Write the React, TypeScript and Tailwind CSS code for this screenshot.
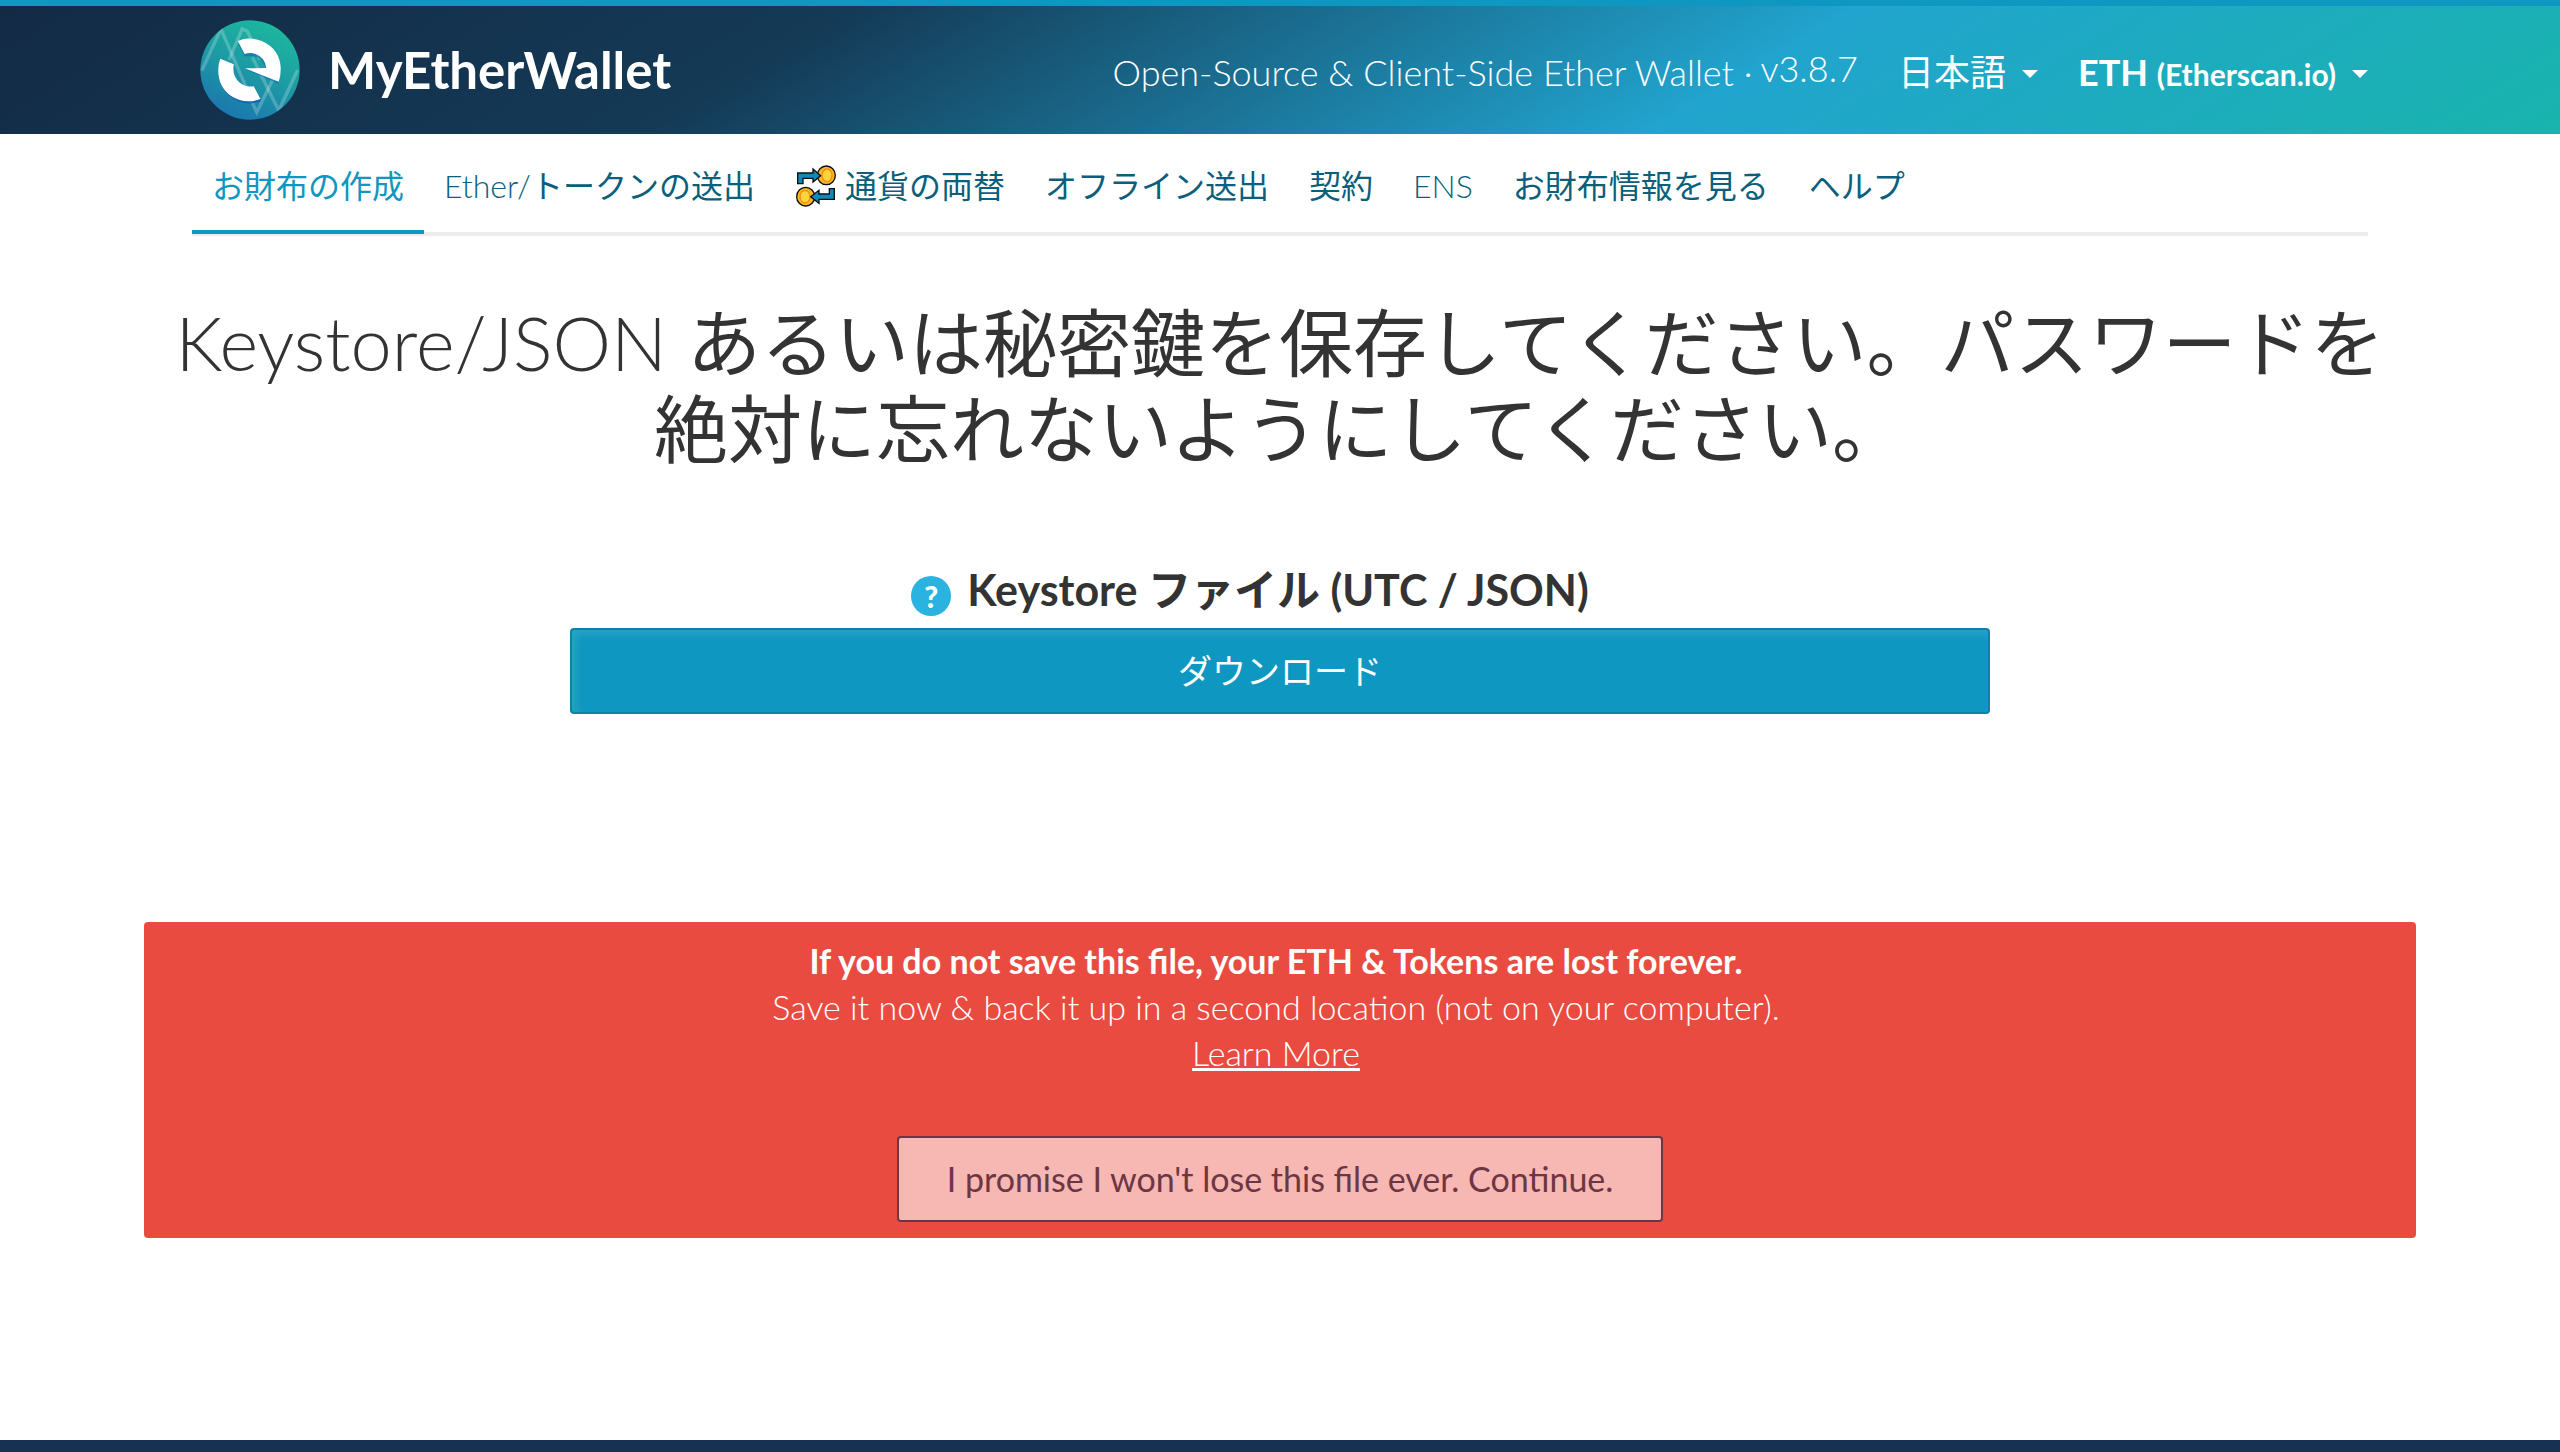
import { useState } from "react";
import type { ReactNode } from "react";

const Logo = () => (
 <svg viewBox="35 32 296 296" className="size-25 shrink-0" aria-hidden="true">
  <defs>
   <linearGradient id="logoFill" x1="0.7" y1="0.05" x2="0.25" y2="1">
    <stop offset="0" stopColor="#1db69f" />
    <stop offset="0.5" stopColor="#1c98a4" />
    <stop offset="1" stopColor="#1b74b0" />
   </linearGradient>
   <clipPath id="logoClip">
    <circle cx="183" cy="180" r="147" />
   </clipPath>
  </defs>
  <circle cx="183" cy="180" r="147" fill="url(#logoFill)" />
  <g clipPath="url(#logoClip)" fill="none" stroke="#fff" strokeOpacity="0.22" strokeWidth="10">
   <path d="M40 182 L97 58 L172 232" />
   <path d="M121 150 L160 58 L176 66 L212 150" />
   <path d="M190 142 L268 300 L324 180" />
   <path d="M186 268 L203 305 L252 205" />
  </g>
  <path d="M147 101 Q205 80 242 112 Q274 138 272 180 L268 221 L170 178 L230 178 Q218 130 167 140 Z" fill="#1863ab" opacity="0.55" />
  <path d="M92 156 L130 172 Q128 232 192 236 L216 272 Q160 292 120 255 Q88 222 92 156 Z" fill="#1765b3" />
  <path d="M147 94 Q180 80 218 94 Q272 118 274 176 Q274 198 268 215 L168 175 L231 174 Q228 144 200 133 Q183 127 167 133 Z" fill="#fff" />
  <path d="M95 147 L135 163 Q129 197 152 217 Q170 232 194 228 L214 266 Q168 283 127 257 Q89 230 89 180 Q89 162 95 147 Z" fill="#fff" />
 </svg>
);

const SwapIcon = () => (
 <svg viewBox="46 17 124 126" className="size-10.5 shrink-0" aria-hidden="true">
  <g stroke="#0c0f12" strokeWidth="4" strokeLinejoin="miter">
   <ellipse cx="139" cy="48" rx="27" ry="28" fill="#fdb827" />
   <ellipse cx="77" cy="112" rx="27" ry="28" fill="#fdb827" />
  </g>
  <g fill="#ffd43a" stroke="#f08c1c" strokeWidth="4">
   <ellipse cx="141" cy="48" rx="15" ry="19" />
   <ellipse cx="75" cy="112" rx="15" ry="19" />
  </g>
  <g fill="#0e8ab8" stroke="#0c0f12" strokeWidth="4" strokeLinejoin="miter">
   <path d="M53 73 V41 H99 V29 L122 49 L99 68 V57 H69 V73 Z" />
   <path d="M163 88 V120 H117 V132 L92 112 L117 93 V104 H148 V88 Z" />
  </g>
 </svg>
);

const Caret = () => (
 <svg viewBox="0 0 16 8" className="mt-1 h-2 w-4 shrink-0" aria-hidden="true">
  <path d="M0 0H16L8 8Z" fill="currentColor" />
 </svg>
);

const tabs: { label: string; icon?: ReactNode }[] = [
 { label: "お財布の作成" },
 { label: "Ether/トークンの送出" },
 { label: "通貨の両替", icon: <SwapIcon /> },
 { label: "オフライン送出" },
 { label: "契約" },
 { label: "ENS" },
 { label: "お財布情報を見る" },
 { label: "ヘルプ" },
];

const App = () => {
 const [active, setActive] = useState(0);

 return (
  <div className="min-h-screen w-full bg-white flex flex-col font-['Lato','Noto_Sans_CJK_JP',sans-serif] font-light text-[#333]">
   <header className="border-t-6 border-[#0e97c0] bg-[linear-gradient(149deg,#132a45,#143a56_31%,#21a4ce_67%,#19b4ad)] text-white">
    <div className="mx-auto w-full max-w-[2272px] pl-14 pr-12 flex items-center justify-between py-3.5">
     <a href="#" className="flex items-center gap-7 text-[51px] leading-24 font-bold">
      <Logo />
      MyEtherWallet
     </a>
     <div className="flex items-start gap-10 text-4xl leading-11">
      <div className="flex items-start gap-2">
       <span className="pt-1">Open-Source &amp; Client-Side Ether Wallet ·</span>
       <button type="button">v3.8.7</button>
      </div>
      <button type="button" className="flex items-center gap-4 pt-1 font-normal">
       日本語
       <Caret />
      </button>
      <button type="button" className="flex items-center gap-4 pt-1 font-bold">
       <span>
        ETH <small className="text-3xl">(Etherscan.io)</small>
       </span>
       <Caret />
      </button>
     </div>
    </div>
   </header>

   <nav className="mx-auto w-full max-w-[2272px] px-12 font-['Lato_Light','Lato','Noto_Sans_CJK_JP',sans-serif] font-normal">
    <ul className="flex border-b-4 border-[#ececec] pt-6">
     {tabs.map((tab, idx) => (
      <li key={tab.label}>
       <a
        href="#"
        onClick={() => setActive(idx)}
        className={`-mb-0.5 flex items-center gap-2 border-b-4 px-5 pt-1 pb-5 text-[32px] leading-12 whitespace-nowrap ${
         idx === active
          ? "border-[#0e97c0] text-[#0e97c0]"
          : "border-transparent text-[#0b5f7c]"
        }`}>
        {tab.icon}
        {tab.label}
       </a>
      </li>
     ))}
    </ul>
   </nav>

   <main className="mx-auto w-full max-w-[2272px] flex-1 flex flex-col items-center pb-50">
    <h1 className="px-6 pt-16 text-center text-[74px] leading-[86px] font-['Lato_Light','Lato','Noto_Sans_CJK_JP',sans-serif] font-normal">
     Keystore/JSON あるいは秘密鍵を保存してください。パスワードを絶対に忘れないようにしてください。
    </h1>

    <section className="w-5/8 pt-22 flex flex-col">
     <div className="flex items-center justify-center gap-4 pr-15">
      <a
       href="#"
       aria-label="Help"
       className="mt-3 flex size-10 items-center justify-center rounded-full bg-[#2ab2e0] text-3xl font-black text-white">
       ?
      </a>
      <h2 className="text-[43px] leading-15 font-bold">
       Keystore ファイル (UTC / JSON)
      </h2>
     </div>
     <button
      type="button"
      className="mt-2 rounded-sm border-2 border-[#0c82a6] bg-[#0e97c0] py-4 text-[34px] leading-[50px] text-white font-normal shadow-[inset_4px_4px_8px_rgba(255,255,255,0.12)]">
      ダウンロード
     </button>
    </section>

    <section className="mt-52 w-full rounded-sm bg-[#ea4b40] pt-4 pb-4 flex flex-col items-center text-white">
     <p className="pr-2 text-center text-[34px] leading-[46px]">
      <strong className="font-bold">
       If you do not save this file, your ETH &amp; Tokens are lost forever.
      </strong>
      <br />
      Save it now &amp; back it up in a second location (not on your computer).
      <br />
      <a href="#" className="underline">
       Learn More
      </a>
     </p>
     <button
      type="button"
      className="mt-15 rounded-sm border-2 border-[#6c3644] bg-[#f7b7b3] px-12 py-4 text-[34px] leading-[50px] font-normal text-[#6c3644]">
      I promise I won't lose this file ever. Continue.
     </button>
    </section>
   </main>

   <footer className="h-3 bg-[#163151]" />
  </div>
 );
};

export default App;
